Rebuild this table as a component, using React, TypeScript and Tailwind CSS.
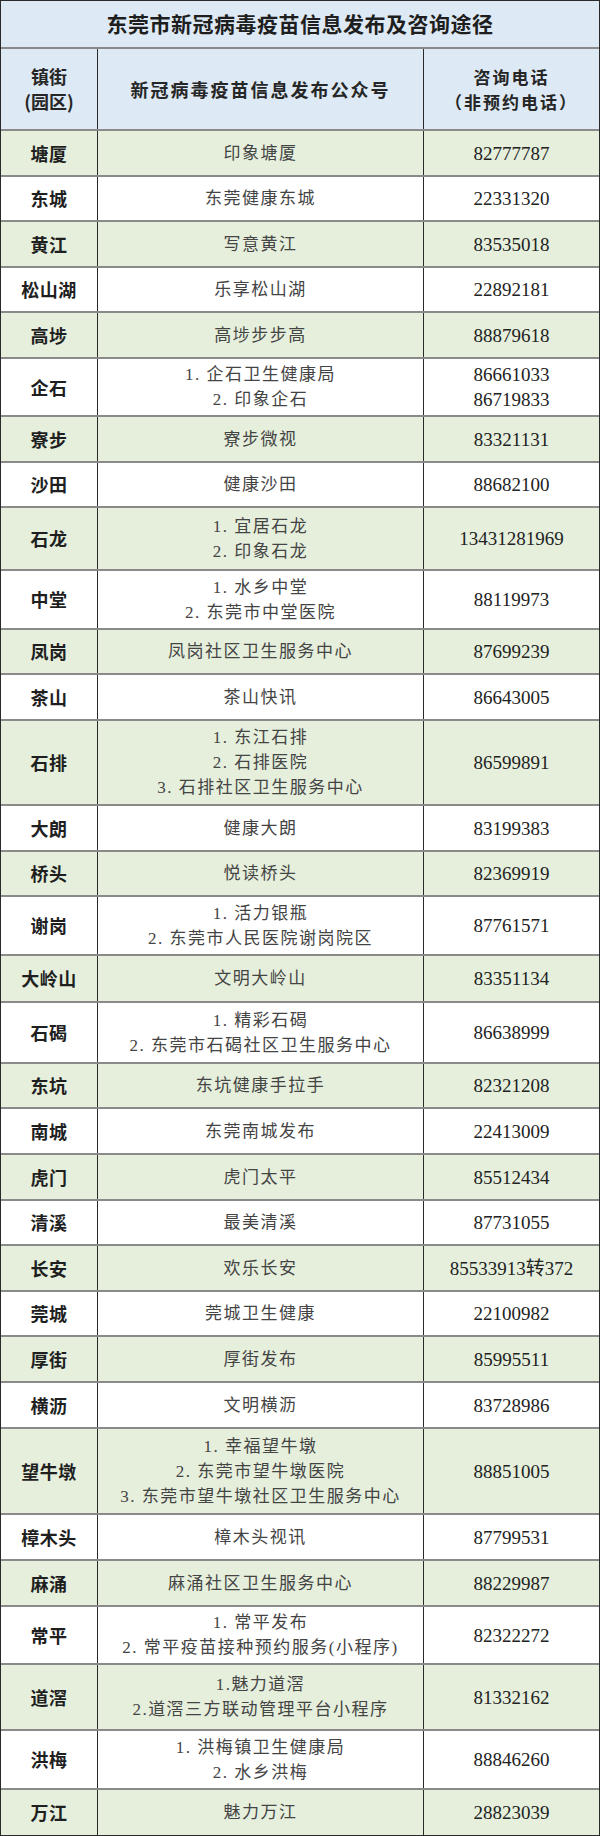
import React from "react";

type Row = {
  name: string;
  lines: string[];
  phones: string[];
  h: string;
  green: boolean;
};

const rows: Row[] = [
  { name: "塘厦", lines: ["印象塘厦"], phones: ["82777787"], h: "h-[46px]", green: true },
  { name: "东城", lines: ["东莞健康东城"], phones: ["22331320"], h: "h-[45px]", green: false },
  { name: "黄江", lines: ["写意黄江"], phones: ["83535018"], h: "h-[46px]", green: true },
  { name: "松山湖", lines: ["乐享松山湖"], phones: ["22892181"], h: "h-[45px]", green: false },
  { name: "高埗", lines: ["高埗步步高"], phones: ["88879618"], h: "h-[46px]", green: true },
  { name: "企石", lines: ["1. 企石卫生健康局", "2. 印象企石"], phones: ["86661033", "86719833"], h: "h-[58px]", green: false },
  { name: "寮步", lines: ["寮步微视"], phones: ["83321131"], h: "h-[46px]", green: true },
  { name: "沙田", lines: ["健康沙田"], phones: ["88682100"], h: "h-[45px]", green: false },
  { name: "石龙", lines: ["1. 宜居石龙", "2. 印象石龙"], phones: ["13431281969"], h: "h-[63px]", green: true },
  { name: "中堂", lines: ["1. 水乡中堂", "2. 东莞市中堂医院"], phones: ["88119973"], h: "h-[59px]", green: false },
  { name: "凤岗", lines: ["凤岗社区卫生服务中心"], phones: ["87699239"], h: "h-[45px]", green: true },
  { name: "茶山", lines: ["茶山快讯"], phones: ["86643005"], h: "h-[46px]", green: false },
  { name: "石排", lines: ["1. 东江石排", "2. 石排医院", "3. 石排社区卫生服务中心"], phones: ["86599891"], h: "h-[85px]", green: true },
  { name: "大朗", lines: ["健康大朗"], phones: ["83199383"], h: "h-[46px]", green: false },
  { name: "桥头", lines: ["悦读桥头"], phones: ["82369919"], h: "h-[45px]", green: true },
  { name: "谢岗", lines: ["1. 活力银瓶", "2. 东莞市人民医院谢岗院区"], phones: ["87761571"], h: "h-[59px]", green: false },
  { name: "大岭山", lines: ["文明大岭山"], phones: ["83351134"], h: "h-[47px]", green: true },
  { name: "石碣", lines: ["1. 精彩石碣", "2. 东莞市石碣社区卫生服务中心"], phones: ["86638999"], h: "h-[61px]", green: false },
  { name: "东坑", lines: ["东坑健康手拉手"], phones: ["82321208"], h: "h-[45px]", green: true },
  { name: "南城", lines: ["东莞南城发布"], phones: ["22413009"], h: "h-[46px]", green: false },
  { name: "虎门", lines: ["虎门太平"], phones: ["85512434"], h: "h-[46px]", green: true },
  { name: "清溪", lines: ["最美清溪"], phones: ["87731055"], h: "h-[45px]", green: false },
  { name: "长安", lines: ["欢乐长安"], phones: ["85533913转372"], h: "h-[46px]", green: true },
  { name: "莞城", lines: ["莞城卫生健康"], phones: ["22100982"], h: "h-[45px]", green: false },
  { name: "厚街", lines: ["厚街发布"], phones: ["85995511"], h: "h-[46px]", green: true },
  { name: "横沥", lines: ["文明横沥"], phones: ["83728986"], h: "h-[46px]", green: false },
  { name: "望牛墩", lines: ["1. 幸福望牛墩", "2. 东莞市望牛墩医院", "3. 东莞市望牛墩社区卫生服务中心"], phones: ["88851005"], h: "h-[86px]", green: true },
  { name: "樟木头", lines: ["樟木头视讯"], phones: ["87799531"], h: "h-[46px]", green: false },
  { name: "麻涌", lines: ["麻涌社区卫生服务中心"], phones: ["88229987"], h: "h-[46px]", green: true },
  { name: "常平", lines: ["1. 常平发布", "2. 常平疫苗接种预约服务(小程序)"], phones: ["82322272"], h: "h-[58px]", green: false },
  { name: "道滘", lines: ["1.魅力道滘", "2.道滘三方联动管理平台小程序"], phones: ["81332162"], h: "h-[66px]", green: true },
  { name: "洪梅", lines: ["1. 洪梅镇卫生健康局", "2. 水乡洪梅"], phones: ["88846260"], h: "h-[59px]", green: false },
  { name: "万江", lines: ["魅力万江"], phones: ["28823039"], h: "h-[45px]", green: true },
];

export default function App() {
  return (
    <div className="w-[600px] h-[1836px] bg-white overflow-hidden">
      <div className="w-[600px] border-l-[1.5px] border-r-[1.5px] border-t-[1.5px] border-b-[1.5px] border-[#2a2a2a] text-[#222]">
        {/* Title */}
        <div className="h-[48px] bg-[#dde9f4] border-b-2 border-[#8a8a8a] flex items-center justify-center font-['Noto_Sans_CJK_SC',sans-serif] font-bold text-[21px] tracking-[0.5px] text-[#1e1e1e]">
          东莞市新冠病毒疫苗信息发布及咨询途径
        </div>
        {/* Header */}
        <div className="h-[82px] bg-[#dde9f4] border-b-2 border-[#8a8a8a] flex font-['Noto_Sans_CJK_SC',sans-serif] font-bold text-[#262626]">
          <div className="w-[97px] border-r-[1.5px] border-[#2a2a2a] flex flex-col items-center justify-center text-[18px] leading-[25px]">
            <span>镇街</span>
            <span>(园区)</span>
          </div>
          <div className="w-[326px] border-r-[1.5px] border-[#2a2a2a] flex items-center justify-center text-[18px] tracking-[2px]">
            新冠病毒疫苗信息发布公众号
          </div>
          <div className="flex-1 flex flex-col items-center justify-center text-[17px] leading-[25px] tracking-[2px]">
            <span>咨询电话</span>
            <span>（非预约电话）</span>
          </div>
        </div>
        {rows.map((r, i) => (
          <div
            key={r.name}
            className={`flex ${r.h} ${r.green ? "bg-[#e5efdc]" : "bg-white"} ${
              i === rows.length - 1 ? "" : "border-b-2 border-[#8a8a8a]"
            }`}
          >
            <div className="w-[97px] border-r-[1.5px] border-[#2a2a2a] flex items-center justify-center font-['Noto_Sans_CJK_SC',sans-serif] font-bold text-[18px] tracking-[0.5px] text-[#1f1f1f]">
              {r.name}
            </div>
            <div className="w-[326px] border-r-[1.5px] border-[#2a2a2a] flex flex-col items-center justify-center font-['Liberation_Serif','Noto_Sans_CJK_SC',serif] text-[17px] leading-[25px] tracking-[1.5px] text-[#444]">
              {r.lines.map((l) => (
                <span key={l} className="whitespace-nowrap">
                  {l}
                </span>
              ))}
            </div>
            <div className="flex-1 flex flex-col items-center justify-center font-['Liberation_Serif','Noto_Sans_CJK_SC',serif] text-[19px] leading-[25px] text-[#222]">
              {r.phones.map((p) => (
                <span key={p} className="whitespace-nowrap">
                  {p}
                </span>
              ))}
            </div>
          </div>
        ))}
      </div>
    </div>
  );
}
